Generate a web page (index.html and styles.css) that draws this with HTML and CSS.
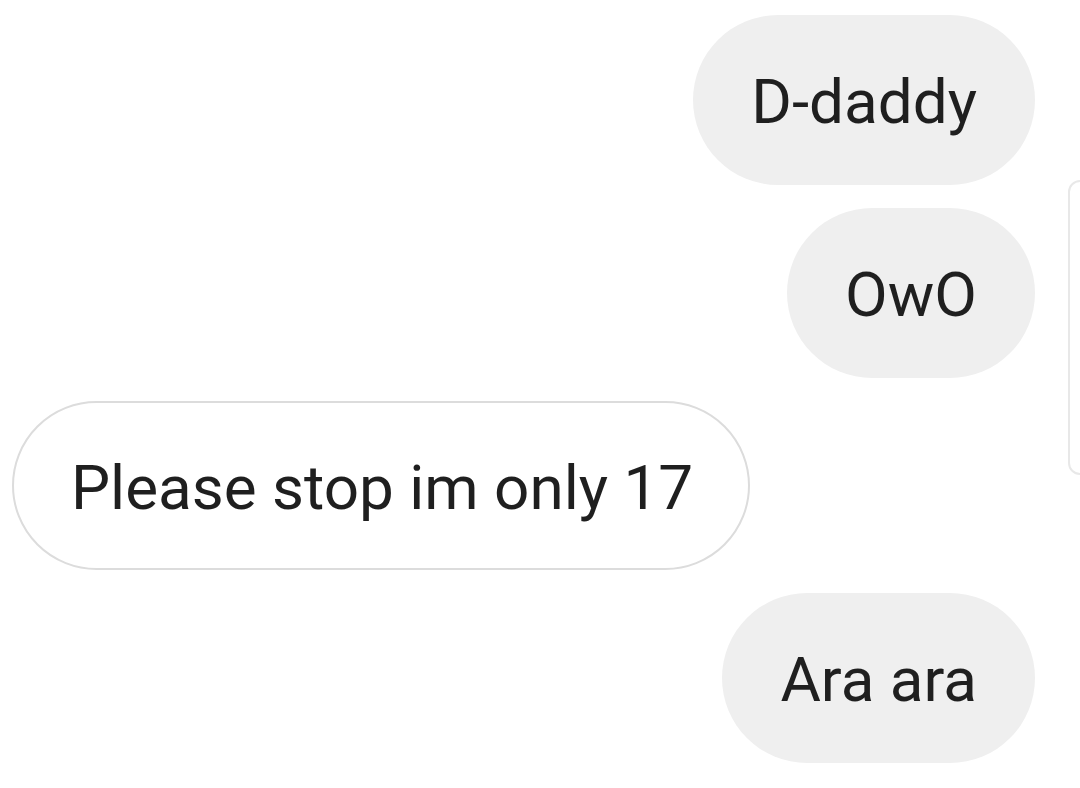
FILE: index.html
```html
<!DOCTYPE html>
<html lang="en">
<head>
  <meta charset="UTF-8">
  <meta name="viewport" content="width=device-width, initial-scale=1.0">
  <title>Chat</title>
  <link rel="stylesheet" href="styles.css">
</head>
<body>
  <div class="thread">
    <div class="bubble sent">D-daddy</div>
    <div class="bubble sent">OwO</div>
    <div class="bubble received">Please stop im only 17</div>
    <div class="bubble sent">Ara ara</div>
  </div>
  <div class="side-panel"></div>
</body>
</html>
```

FILE: styles.css
```css
html, body {
  margin: 0;
  background: #fff;
}
body {
  font-family: Roboto, "Noto Sans", sans-serif;
  color: #1f1f1f;
  width: 1080px;
  height: 788px;
  overflow: hidden;
  position: relative;
}
.thread {
  display: flex;
  flex-direction: column;
  align-items: flex-end;
  gap: 23px;
  padding: 15px 45px 0 12px;
}
.bubble {
  box-sizing: border-box;
  height: 170px;
  border-radius: 85px;
  padding: 0 58px;
  display: flex;
  align-items: center;
  font-size: 62px;
  line-height: 1;
  padding-top: 4px;
}
.sent {
  background-color: #efefef;
}
.received {
  align-self: flex-start;
  height: 169px;
  background-color: #fff;
  border: 2px solid #dcdcdc;
  padding-left: 57px;
  padding-right: 55px;
}
.side-panel {
  position: absolute;
  left: 1068px;
  top: 180px;
  width: 40px;
  height: 291px;
  border: 2px solid #e8e8e8;
  border-radius: 12px;
}
```
